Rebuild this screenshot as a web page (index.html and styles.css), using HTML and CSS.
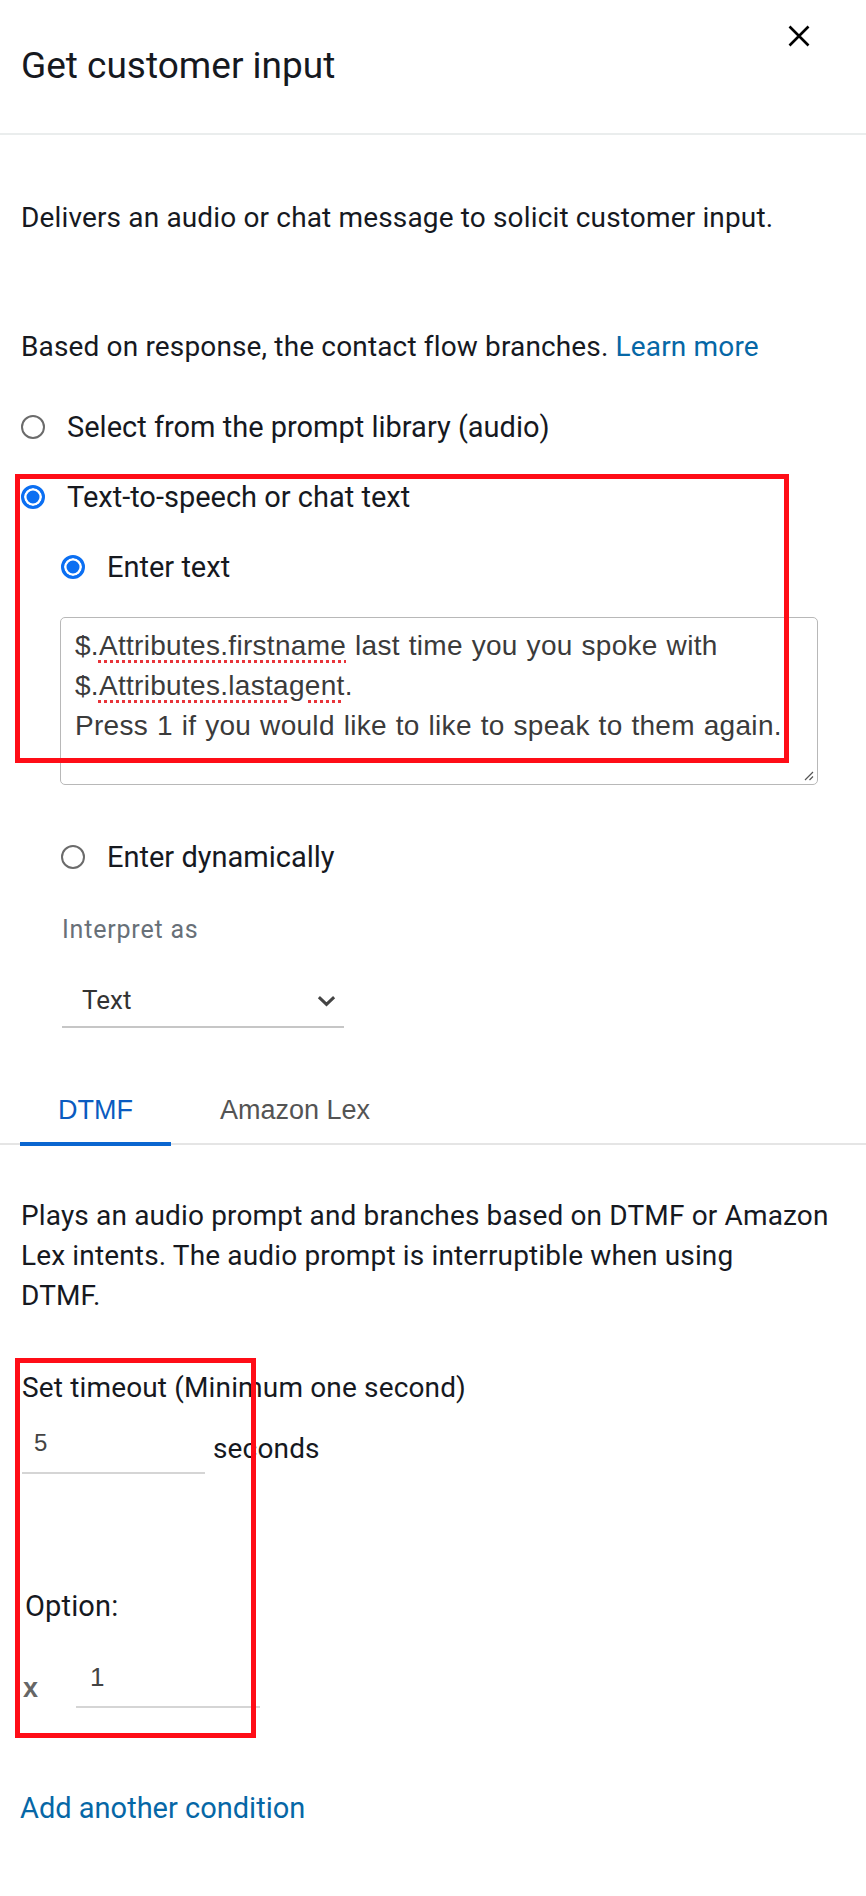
FILE: index.html
```html
<!DOCTYPE html>
<html lang="en">
<head>
<meta charset="utf-8">
<title>Get customer input</title>
<link rel="stylesheet" href="styles.css">
</head>
<body>
<div class="panel">
  <header class="head">
    <h1 class="title">Get customer input</h1>
    <button class="close" aria-label="Close">
      <svg viewBox="0 0 24 24" width="24" height="24"><path d="M2.5 2.5L21.5 21.5M21.5 2.5L2.5 21.5" stroke="#000" stroke-width="2.6" fill="none"/></svg>
    </button>
  </header>
  <div class="content">
    <p class="desc">Delivers an audio or chat message to solicit customer input.</p>
    <p class="based">Based on response, the contact flow branches. <a class="link" href="#">Learn more</a></p>

    <div class="radio r1"><span class="ring"></span><span class="rlabel">Select from the prompt library (audio)</span></div>
    <div class="radio r2"><span class="ring on"></span><span class="rlabel">Text-to-speech or chat text</span></div>
    <div class="radio r3 sub"><span class="ring on"></span><span class="rlabel">Enter text</span></div>

    <div class="textarea">
      <div class="ta-line">$.<span class="sp">Attributes.firstname</span> last time you you spoke with</div>
      <div class="ta-line">$.<span class="sp">Attributes.lastagent</span>.</div>
      <div class="ta-line">Press 1 if you would like to like to speak to them again.</div>
      <svg class="grip" viewBox="0 0 12 12" width="12" height="12"><path d="M11 3L3 11M11 7.5L7.5 11" stroke="#555" stroke-width="1.2" fill="none"/></svg>
    </div>

    <div class="radio r4 sub"><span class="ring"></span><span class="rlabel">Enter dynamically</span></div>

    <div class="interp">Interpret as</div>
    <div class="select">
      <span class="sel-val">Text</span>
      <svg class="chev" viewBox="0 0 20 12" width="19" height="12"><path d="M2 2L10 9.5L18 2" stroke="#444" stroke-width="3.2" fill="none"/></svg>
    </div>

    <div class="tabs">
      <div class="tab active">DTMF</div>
      <div class="tab">Amazon Lex</div>
    </div>

    <p class="plays">Plays an audio prompt and branches based on DTMF or Amazon<br>Lex intents. The audio prompt is interruptible when using<br>DTMF.</p>

    <div class="timeout">Set timeout (Minimum one second)</div>
    <div class="trow">
      <div class="field f-time">5</div>
      <span class="unit">seconds</span>
    </div>

    <div class="opt">Option:</div>
    <div class="orow">
      <span class="x">x</span>
      <div class="field f-opt">1</div>
    </div>

    <a class="add" href="#">Add another condition</a>
  </div>

  <div class="mark mark-1"></div>
  <div class="mark mark-2"></div>
</div>
</body>
</html>
```
FILE: styles.css
```css
* { box-sizing: border-box; }
html, body { margin: 0; padding: 0; background: #fff; }
body {
  font-family: Roboto, "Liberation Sans", Arial, sans-serif;
  color: #16191f;
}
.panel {
  position: relative;
  width: 866px;
  min-height: 1896px;
}
.head {
  display: flex;
  justify-content: space-between;
  align-items: flex-start;
  height: 135px;
  border-bottom: 2px solid #eaeded;
  padding-left: 21px;
}
.title {
  margin: 44px 0 0;
  font-size: 37px;
  line-height: 44px;
  font-weight: 400;
  color: #16191f;
}
.close {
  margin: 24px 55px 0 0;
  padding: 0;
  border: 0;
  background: none;
  width: 24px;
  height: 24px;
  display: block;
}
.close svg { display: block; }
.content {
  padding-left: 21px;
  font-size: 28px;
  letter-spacing: 0.15px;
  line-height: 40px;
}
p { margin: 0; }
.desc { margin-top: 63px; }
.based { margin-top: 89px; }
.link, .add { color: #0667a6; text-decoration: none; }

.radio {
  display: flex;
  align-items: center;
  height: 40px;
  margin-top: 30px;
  font-size: 29px;
  letter-spacing: 0;
}
.radio.r1 { margin-top: 40px; }
.radio.sub { margin-left: 40px; }
.radio.r4 { margin-top: 52px; }
.ring {
  width: 24px;
  height: 24px;
  border-radius: 50%;
  border: 2px solid #6b6b6b;
  margin-right: 22px;
  flex: none;
}
.ring.on {
  border: 3px solid #0b6ff2;
  background: #0b6ff2;
  box-shadow: inset 0 0 0 2.5px #fff;
}
.textarea {
  position: relative;
  margin: 30px 0 0 39px;
  width: 758px;
  height: 168px;
  border: 1.5px solid #b8b8b8;
  border-radius: 5px;
  padding: 8px 14px;
  font-family: "Liberation Sans", Arial, sans-serif;
  font-size: 28px;
  letter-spacing: 0.3px;
  word-spacing: 0.8px;
  line-height: 40px;
  color: #3b3b3b;
}
.sp {
  text-decoration: underline dotted #e8343a;
  text-decoration-thickness: 2.5px;
  text-underline-offset: 5px;
}
.grip { position: absolute; right: 3px; bottom: 3px; }

.interp {
  margin: 37px 0 0 41px;
  font-size: 25px;
  letter-spacing: 0.8px;
  line-height: 32px;
  color: #687078;
}
.select {
  margin: 34px 0 0 41px;
  width: 282px;
  height: 48px;
  border-bottom: 2px solid #c6c6c6;
  padding: 0 8px 0 20px;
  display: flex;
  justify-content: space-between;
  align-items: flex-start;
  color: #333;
  font-size: 26px;
  letter-spacing: 0;
}
.chev { margin-top: 15px; }

.tabs {
  margin: 62px 0 0 -21px;
  width: 866px;
  display: flex;
  gap: 11px;
  padding-left: 20px;
  border-bottom: 2px solid #e5e5e5;
  font-family: "Liberation Sans", Arial, sans-serif;
  font-size: 27px;
  letter-spacing: 0;
}
.tab {
  padding: 0 38px 12px;
  line-height: 40px;
  color: #545454;
  margin-bottom: -3px;
  border-bottom: 4px solid transparent;
}
.tab.active {
  color: #0a5bc0;
  border-bottom-color: #0a66d0;
}
.plays { margin-top: 51px; }
.timeout { margin-top: 52px; padding-left: 1px; }
.trow {
  display: flex;
  align-items: flex-start;
  margin-top: 15px;
  margin-left: 1px;
}
.field {
  font-family: "Liberation Sans", Arial, sans-serif;
  font-size: 24px;
  letter-spacing: 0;
  line-height: 40px;
  color: #444;
  border-bottom: 2px solid #d5d5d5;
}
.f-time { width: 183px; height: 51px; padding-left: 12px; }
.unit { margin: 6px 0 0 8px; }
.opt { margin-top: 112px; padding-left: 4px; font-size: 29px; }
.orow {
  display: flex;
  align-items: flex-start;
  margin-top: 31px;
}
.x {
  font-family: "Liberation Sans", Arial, sans-serif;
  font-weight: 700;
  font-size: 27px;
  color: #666;
  margin: 11px 0 0 2px;
  width: 53px;
}
.f-opt { width: 184px; height: 51px; padding-left: 14px; font-size: 26px; }
.add { display: inline-block; margin-top: 80px; margin-left: -1px; font-size: 29px; letter-spacing: 0; }

.mark {
  position: absolute;
  border: 5px solid #ff0d17;
  pointer-events: none;
}
.mark-1 { left: 15px; top: 474px; width: 774px; height: 289px; }
.mark-2 { left: 15px; top: 1358px; width: 241px; height: 380px; }
```
